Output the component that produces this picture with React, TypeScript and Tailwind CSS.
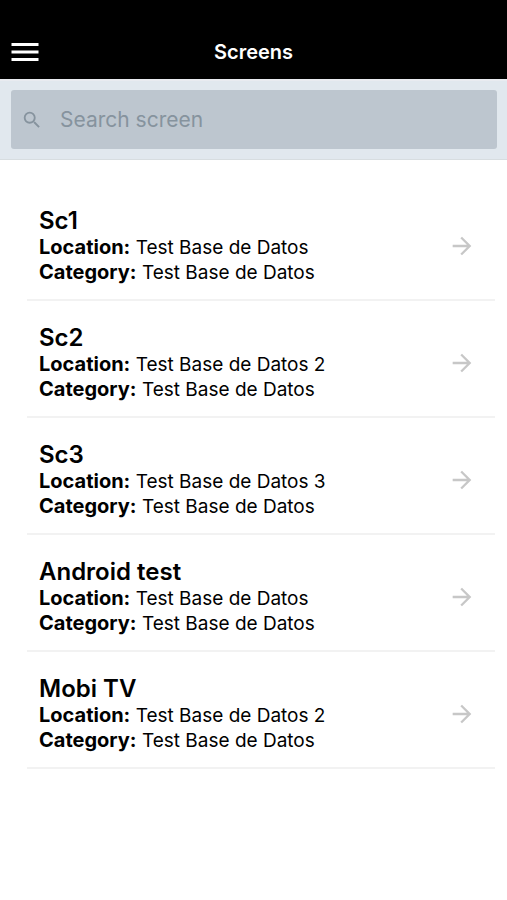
import { MdArrowForward, MdMenu, MdSearch } from "react-icons/md";

type Screen = { name: string; location: string; category: string };

const screens: Screen[] = [
  { name: "Sc1", location: "Test Base de Datos", category: "Test Base de Datos" },
  { name: "Sc2", location: "Test Base de Datos 2", category: "Test Base de Datos" },
  { name: "Sc3", location: "Test Base de Datos 3", category: "Test Base de Datos" },
  { name: "Android test", location: "Test Base de Datos", category: "Test Base de Datos" },
  { name: "Mobi TV", location: "Test Base de Datos 2", category: "Test Base de Datos" },
];

function Header() {
  return (
    <header className="grid grid-cols-[1fr_auto_1fr] items-center bg-black px-[7px] pt-[34px] pb-[9px] text-white">
      <button type="button" aria-label="Open menu" className="justify-self-start">
        <MdMenu className="size-9" />
      </button>
      <h1 className="text-xl leading-9 font-semibold">Screens</h1>
    </header>
  );
}

function SearchBar() {
  return (
    <div className="border-t-2 border-b border-t-[#e9ebf0] border-b-[#d7dde0] bg-[#e1e8ee] pt-[9px] pr-2.5 pb-2.5 pl-[11px]">
      <label className="flex h-[59px] items-center rounded-[3px] bg-[#bdc6cf] pl-2.5 text-[#86939e]">
        <MdSearch className="size-[22px] shrink-0" />
        <input
          type="search"
          aria-label="Search screen"
          placeholder="Search screen"
          className="ml-[17px] min-w-0 flex-1 bg-transparent text-[21px] outline-none placeholder:text-[#86939e]"
        />
      </label>
    </div>
  );
}

function Detail({ label, value }: { label: string; value: string }) {
  return (
    <p className="text-[19px] leading-[25px]">
      <strong className="text-xl leading-[25px] font-bold">{label}:</strong> {value}
    </p>
  );
}

function ScreenRow({ screen }: { screen: Screen }) {
  return (
    <li className="border-b-2 border-[#f2f2f2]">
      <button type="button" className="flex w-full items-center pt-[22px] pr-[19px] pb-[14px] pl-3 text-left">
        <div className="min-w-0 flex-1">
          <h2 className="text-2xl leading-[29px] font-semibold">{screen.name}</h2>
          <Detail label="Location" value={screen.location} />
          <Detail label="Category" value={screen.category} />
        </div>
        <MdArrowForward className="size-7 shrink-0 text-[#c7c7c7]" />
      </button>
    </li>
  );
}

export default function App() {
  return (
    <div className="min-h-screen bg-white font-['Inter',sans-serif] text-black">
      <Header />
      <SearchBar />
      <main className="pt-6 pr-3 pl-[27px]">
        <ul>
          {screens.map((screen) => (
            <ScreenRow key={screen.name} screen={screen} />
          ))}
        </ul>
      </main>
    </div>
  );
}
